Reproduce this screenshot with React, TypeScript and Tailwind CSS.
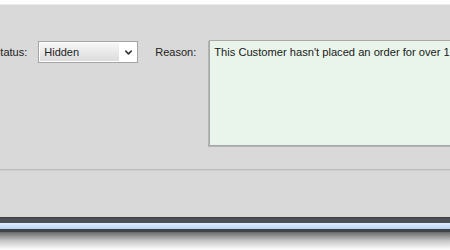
import { ChevronDown } from 'lucide-react';

export default function App() {
  return (
    <div className="w-[450px] h-[250px] overflow-hidden bg-white flex flex-col font-['Liberation_Sans',Arial,sans-serif] text-[11px] text-[#222]">
      {/* top window edge */}
      <div className="h-[5px] shrink-0 bg-white border-b border-[#ececec]" />

      {/* form panel */}
      <div className="h-[212px] shrink-0 bg-[#d9d9d9] flex flex-col">
        <div className="flex items-start pt-[35px]">
          <span className="shrink-0 ml-[-7px] mt-[1px] h-[22px] leading-[22px] whitespace-nowrap">Status:</span>

          <div className="shrink-0 ml-[11px] mt-[1px] w-[100px] h-[22px] border border-[#a4a4a4] flex bg-white">
            <div className="flex-1 flex items-center pl-[4px] m-[1px] mr-0 bg-gradient-to-b from-[#f6f6f6] to-[#dcdcdc]">
              Hidden
            </div>
            <div className="w-[18px] flex items-center justify-center">
              <ChevronDown size={11} strokeWidth={3.2} className="text-[#333]" />
            </div>
          </div>

          <span className="shrink-0 ml-[17px] mt-[1px] h-[22px] leading-[22px] whitespace-nowrap">Reason:</span>

          <div className="shrink-0 ml-[13px] w-[260px] h-[106px] border border-[#a8a8a8] bg-[#e9f4ea] shadow-[-1px_1px_0_#b4b4b4] pl-[4px] pt-[5px] whitespace-nowrap overflow-hidden leading-[13px] text-[11.15px] text-[#1a1a1a]">
            This Customer hasn't placed an order for over 1 year
          </div>
        </div>

        <div className="mt-[23px] h-[2px] border-t border-[#bdbdbd] bg-[#cfcfcf]" />
      </div>

      {/* bottom window edge */}
      <div className="h-[6px] shrink-0 bg-[#4b4f56] border-t border-[#3c3f44]" />
      <div className="h-[6px] shrink-0 bg-gradient-to-b from-[#e0eefb] to-[#b4d2ef]" />
      <div className="h-[3px] shrink-0 bg-[#3f4247]" />
      <div className="flex-1 bg-gradient-to-b from-[#6a6a6a] via-[#c9c9c9] to-white" />
    </div>
  );
}
